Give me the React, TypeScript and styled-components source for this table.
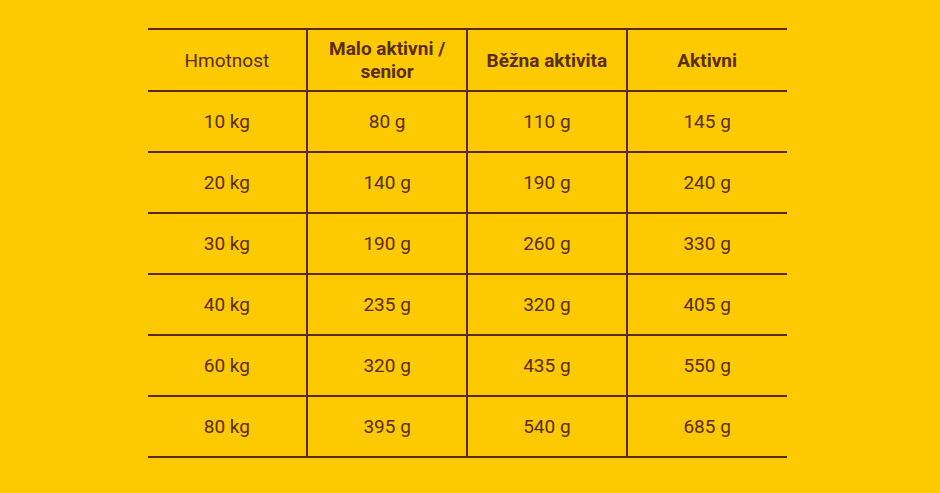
import styled, { createGlobalStyle } from 'styled-components';

const GlobalStyle = createGlobalStyle`
  html, body {
    margin: 0;
    padding: 0;
    background: #fdc900;
  }
`;

const Page = styled.div`
  width: 940px;
  height: 493px;
  background: #fdc900;
  display: flex;
  justify-content: center;
  padding-top: 28px;
  box-sizing: border-box;
  font-family: Roboto, 'Liberation Sans', sans-serif;
  color: #5b2d0b;
`;

const Table = styled.table`
  width: 639px;
  margin-left: -6px;
  border-collapse: collapse;
  table-layout: fixed;
  height: fit-content;
`;

const Row = styled.tr<{ $header?: boolean }>`
  height: ${(p) => (p.$header ? '62px' : '61px')};
  border-top: 2px solid #5a2a0a;
  &:last-child {
    border-bottom: 2px solid #5a2a0a;
  }
`;

const Cell = styled.td<{ $bold?: boolean }>`
  padding: 0;
  text-align: center;
  vertical-align: middle;
  font-size: 19px;
  font-weight: ${(p) => (p.$bold ? 700 : 400)};
  line-height: 23px;
  & + & {
    border-left: 2px solid #5a2a0a;
  }
`;

const rows = [
  ['10 kg', '80 g', '110 g', '145 g'],
  ['20 kg', '140 g', '190 g', '240 g'],
  ['30 kg', '190 g', '260 g', '330 g'],
  ['40 kg', '235 g', '320 g', '405 g'],
  ['60 kg', '320 g', '435 g', '550 g'],
  ['80 kg', '395 g', '540 g', '685 g'],
];

export default function App() {
  return (
    <>
      <GlobalStyle />
      <Page>
        <Table>
          <tbody>
            <Row $header>
              <Cell>Hmotnost</Cell>
              <Cell $bold>
                Malo aktivni /<br />
                senior
              </Cell>
              <Cell $bold>Běžna aktivita</Cell>
              <Cell $bold>Aktivni</Cell>
            </Row>
            {rows.map((r) => (
              <Row key={r[0]}>
                {r.map((v, i) => (
                  <Cell key={i}>{v}</Cell>
                ))}
              </Row>
            ))}
          </tbody>
        </Table>
      </Page>
    </>
  );
}
